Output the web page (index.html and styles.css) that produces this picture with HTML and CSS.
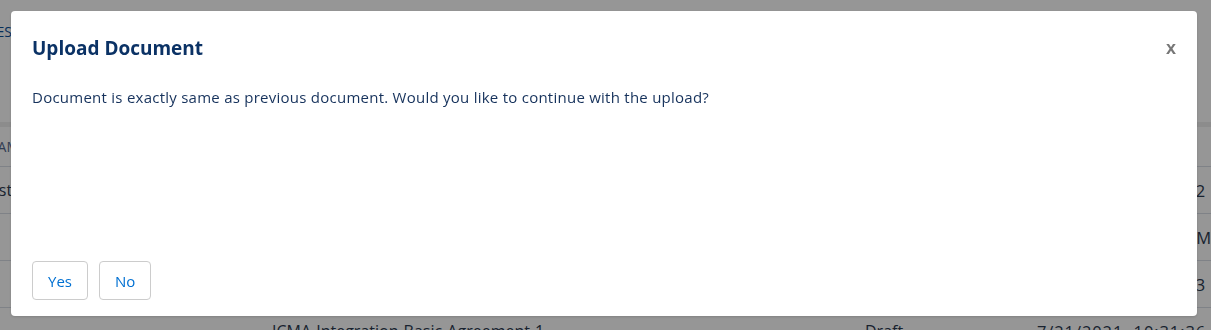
FILE: index.html
```html
<!DOCTYPE html>
<html lang="en">
<head>
    <meta charset="UTF-8">
    <meta name="viewport" content="width=device-width, initial-scale=1.0">
    <title>Upload Document</title>
    <link rel="stylesheet" href="styles.css">
</head>
<body>
    <div class="page">
        <div class="page-top">
            <a class="page-link" href="#">FILES</a>
        </div>
        <div class="page-band"></div>
        <table class="doc-table">
            <thead>
                <tr>
                    <th class="col-name">NAME</th>
                    <th class="col-title">TITLE</th>
                    <th class="col-status">STATUS</th>
                    <th class="col-date">LAST MODIFIED</th>
                </tr>
            </thead>
            <tbody>
                <tr>
                    <td class="col-name">Test</td>
                    <td class="col-title">ICMA Agreement 1</td>
                    <td class="col-status">Draft</td>
                    <td class="col-date">7/21/2021, 10:29:52</td>
                </tr>
                <tr>
                    <td class="col-name"></td>
                    <td class="col-title">ICMA Agreement 2</td>
                    <td class="col-status">Draft</td>
                    <td class="col-date">7/21/2021, 10:30 PM</td>
                </tr>
                <tr>
                    <td class="col-name"></td>
                    <td class="col-title">ICMA Agreement 3</td>
                    <td class="col-status">Draft</td>
                    <td class="col-date">7/21/2021, 10:30:53</td>
                </tr>
                <tr>
                    <td class="col-name"></td>
                    <td class="col-title">ICMA-Integration-Basic-Agreement-1</td>
                    <td class="col-status">Draft</td>
                    <td class="col-date">7/21/2021, 10:31:36</td>
                </tr>
            </tbody>
        </table>
    </div>

    <div class="overlay">
        <div class="modal">
            <div class="modal-header">
                <h2 class="modal-title">Upload Document</h2>
                <button class="modal-close" type="button">x</button>
            </div>
            <div class="modal-body">
                <p>Document is exactly same as previous document. Would you like to continue with the upload?</p>
            </div>
            <div class="modal-footer">
                <button class="btn" type="button">Yes</button>
                <button class="btn" type="button">No</button>
            </div>
        </div>
    </div>
</body>
</html>
```

FILE: styles.css
```css
body {
    margin: 0;
    padding: 0;
    font-family: 'Open Sans', 'Noto Sans', sans-serif;
    background: #fff;
    color: #16325c;
    overflow: hidden;
}
.page {
    height: 330px;
    overflow: hidden;
}
.page-top {
    height: 122px;
}
.page-link {
    display: block;
    padding-top: 22px;
    margin-left: -22px;
    font-size: 14px;
    color: #0a4f9a;
    text-decoration: none;
}
.page-band {
    height: 5px;
    background: #eeeeee;
}
.doc-table {
    width: 100%;
    border-collapse: collapse;
    table-layout: fixed;
    font-size: 16px;
    color: #2c3a50;
}
.doc-table th,
.doc-table td {
    text-align: left;
    white-space: nowrap;
    border-bottom: 1px solid #d8dde6;
    padding: 0;
    overflow: visible;
}
.doc-table th {
    height: 39px;
    font-weight: normal;
    font-size: 14px;
    color: #54698d;
}
.doc-table td {
    height: 46px;
}
.col-name {
    width: 40px;
    text-indent: -19px;
}
th.col-name {
    text-indent: -13px;
}
.col-title {
    width: 560px;
    text-indent: 232px;
}
.col-status {
    width: 235px;
    text-indent: 265px;
}
.col-date {
    text-indent: 202px;
    font-size: 16.5px;
    letter-spacing: 0.9px;
}
.overlay {
    position: fixed;
    inset: 0;
    background: rgba(0, 0, 0, 0.41);
    padding: 11px 14px 0 11px;
}
.modal {
    height: 305px;
    background: #fff;
    border-radius: 4px;
    box-shadow: 0 1px 3px rgba(0, 0, 0, 0.15);
    display: flex;
    flex-direction: column;
    padding: 0 21px 16px 21px;
    box-sizing: border-box;
}
.modal-header {
    display: flex;
    justify-content: space-between;
    align-items: center;
    padding-top: 24px;
}
.modal-title {
    margin: 0;
    font-size: 19px;
    font-weight: bold;
    color: #0b3265;
    line-height: 26px;
}
.modal-close {
    border: none;
    background: none;
    padding: 0;
    font-family: 'Liberation Sans', Arial, sans-serif;
    font-size: 18px;
    font-weight: bold;
    color: #777;
    cursor: pointer;
}
.modal-body p {
    margin: 26px 0 0 0;
    font-size: 15px;
    letter-spacing: 0.25px;
    line-height: 20px;
    color: #16325c;
}
.modal-footer {
    margin-top: auto;
    display: flex;
    gap: 11px;
}
.btn {
    height: 39px;
    padding: 0 15px;
    background: #fff;
    border: 1px solid #cccccc;
    border-radius: 4px;
    font-family: inherit;
    font-size: 15px;
    color: #0070d2;
    cursor: pointer;
}
```
